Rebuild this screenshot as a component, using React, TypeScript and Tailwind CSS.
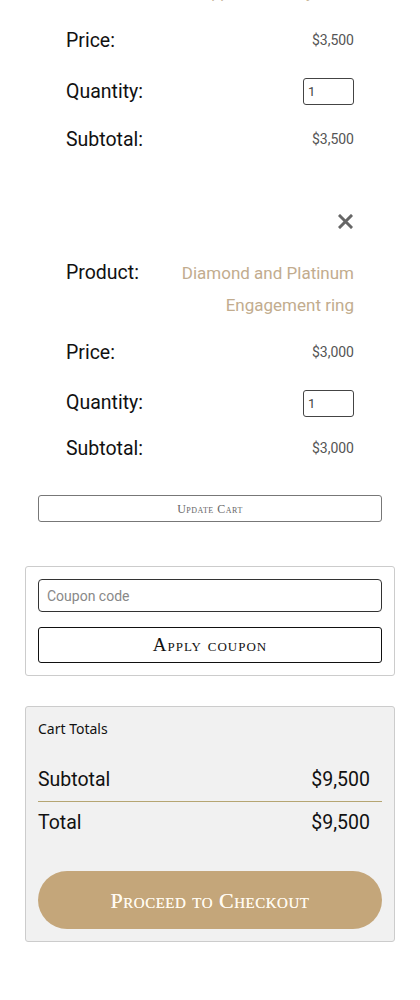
import React from "react";

const roboto = { fontFamily: "Roboto, 'Liberation Sans', sans-serif" } as const;

function Row({ label, children, h }: { label: string; children: React.ReactNode; h: string }) {
  return (
    <div className={`flex items-center justify-between ${h}`}>
      <span className="text-[19.5px] text-[#111]">{label}</span>
      {children}
    </div>
  );
}

function Qty() {
  return (
    <input
      defaultValue="1"
      className="w-[51px] h-[27px] border border-[#444] rounded-[3px] px-[4px] text-[13px] text-[#444] outline-none"
      style={roboto}
    />
  );
}

export default function App() {
  return (
    <div className="w-[420px] bg-white pb-[59px]" style={roboto}>
      <div className="px-[38px]">
        <div className="px-[28px]">
          <div className="h-[6px] overflow-hidden flex justify-end">
            <span className="mt-[-23px] leading-[32px] text-[16px] text-[#c9b79c]">Sapphire Eternity Band</span>
          </div>
          <div className="pt-[10px]">
            <Row label="Price:" h="h-[49px]">
              <span className="text-[14px] text-[#555]">$3,500</span>
            </Row>
            <Row label="Quantity:" h="h-[53px]">
              <Qty />
            </Row>
            <Row label="Subtotal:" h="h-[43px]">
              <span className="text-[14px] text-[#555]">$3,500</span>
            </Row>
          </div>
          <div className="h-[46px]" />
          <div className="flex justify-end h-[28px] items-center">
            <svg width="15" height="15" viewBox="0 0 15 15" className="mr-[1px]">
              <path d="M2 2 L13 13 M13 2 L2 13" stroke="#666" strokeWidth="3" strokeLinecap="square" />
            </svg>
          </div>
          <div className="h-[22px]" />
          <div className="flex justify-between items-start">
            <span className="text-[19.5px] text-[#111] leading-[32px]">Product:</span>
            <span className="text-[17px] leading-[32px] text-right text-[#c2ac8e] w-[200px]">
              Diamond and Platinum Engagement ring
            </span>
          </div>
          <div className="h-[6px]" />
          <Row label="Price:" h="h-[51px]">
            <span className="text-[14px] text-[#555]">$3,000</span>
          </Row>
          <Row label="Quantity:" h="h-[50px]">
            <Qty />
          </Row>
          <Row label="Subtotal:" h="h-[41px]">
            <span className="text-[14px] text-[#555]">$3,000</span>
          </Row>
        </div>
        <div className="h-[26px]" />
        <button
          className="w-full h-[27px] border border-[#777] rounded-[3px] text-[12px] text-[#666] [font-variant-caps:small-caps] tracking-[0.5px]"
          style={{ fontFamily: "'Liberation Serif', serif" }}
        >
          Update Cart
        </button>
      </div>

      <div className="mx-[25px] mt-[44px] border border-[#ccc] rounded-[3px] px-[12px] pt-[12px] pb-[12px] flex flex-col gap-[15px]">
        <input
          placeholder="Coupon code"
          className="w-full h-[33px] border border-[#333] rounded-[4px] px-[8px] text-[14px] text-[#333] placeholder:text-[#888] outline-none"
          style={roboto}
        />
        <button
          className="w-full h-[36px] border border-[#111] rounded-[3px] text-[19px] text-[#111] [font-variant-caps:small-caps] tracking-[1px]"
          style={{ fontFamily: "'Liberation Serif', serif" }}
        >
          Apply coupon
        </button>
      </div>

      <div className="mx-[25px] mt-[30px] border border-[#ccc] rounded-[3px] bg-[#f1f1f1] px-[12px] pt-[12px] pb-[12px]">
        <div className="text-[14px] text-[#111] leading-[20px]" style={{ fontFamily: "'Noto Sans', 'Open Sans', sans-serif" }}>
          Cart Totals
        </div>
        <div className="h-[20px]" />
        <div className="flex justify-between items-center h-[42px] pr-[12px] text-[19.5px] text-[#111]">
          <span>Subtotal</span>
          <span>$9,500</span>
        </div>
        <div className="border-t border-[#b5a572]" />
        <div className="flex justify-between items-center h-[42px] pr-[12px] text-[19.5px] text-[#111]">
          <span>Total</span>
          <span>$9,500</span>
        </div>
        <div className="h-[27px]" />
        <button
          className="w-full h-[58px] rounded-full bg-[#c4a67a] text-[#fffaf0] text-[22px] [font-variant-caps:small-caps] tracking-[0.5px] [text-shadow:0_0_0.6px_#fffaf0]"
          style={{ fontFamily: "'Liberation Serif', serif" }}
        >
          Proceed to Checkout
        </button>
      </div>
    </div>
  );
}
